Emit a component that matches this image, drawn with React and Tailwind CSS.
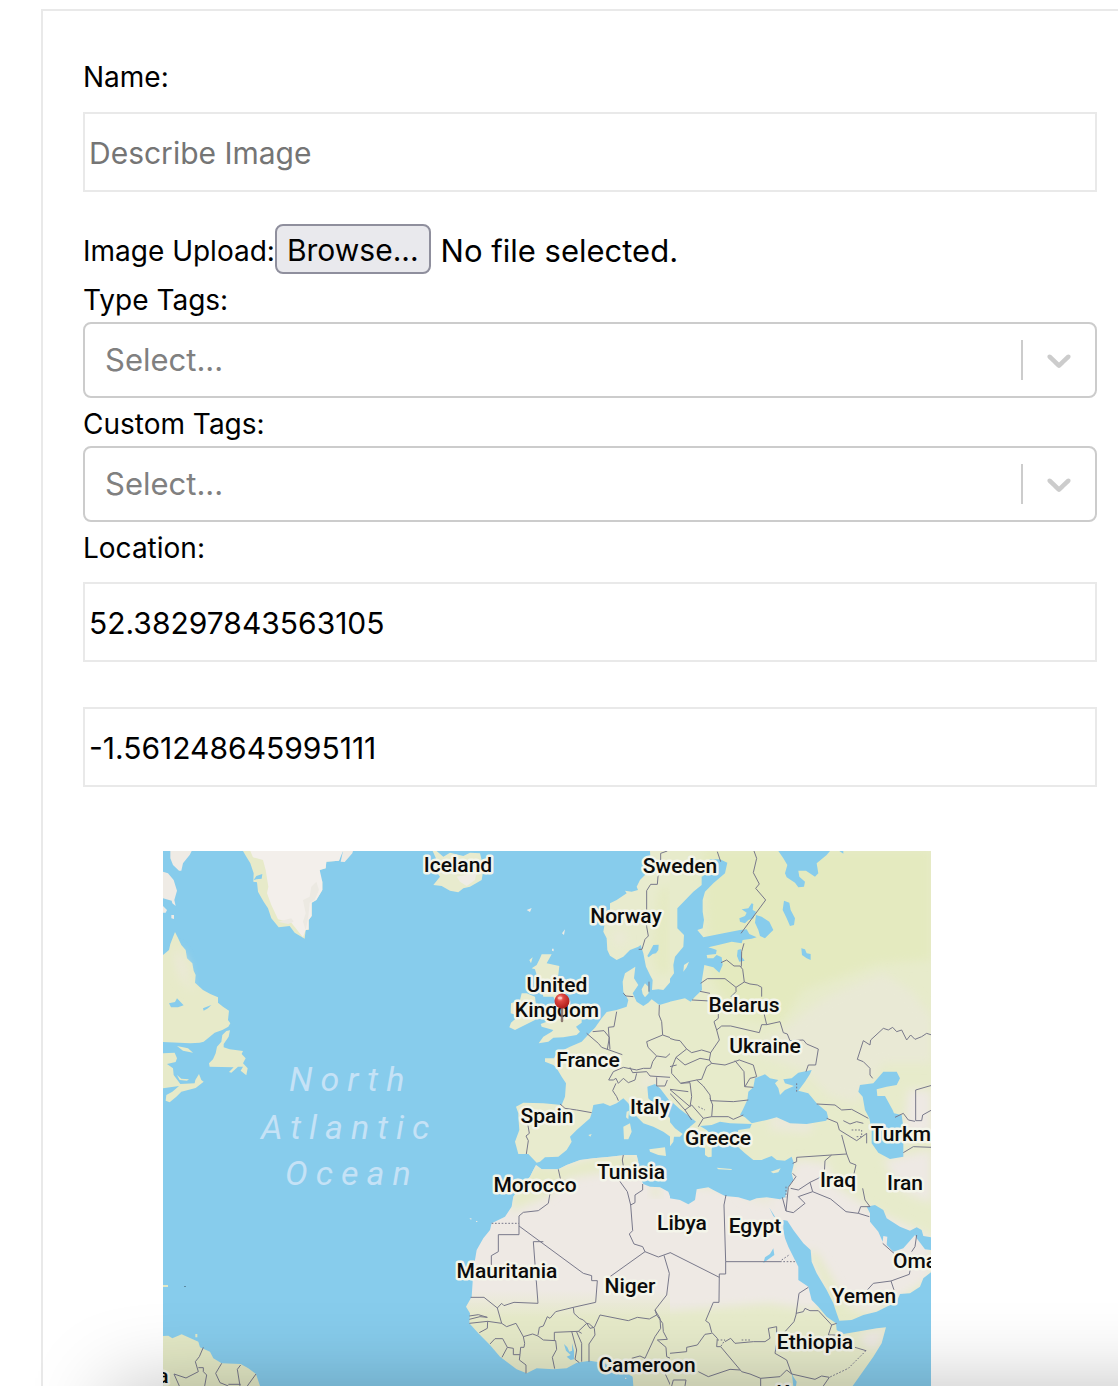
import { useRef, useState } from "react";

const labelClass = "block text-[28px] leading-9";
const inputClass =
  "block h-20 w-full border-2 border-[#e9e9e9] bg-white px-1 pt-0.5 text-[30px] text-black outline-none placeholder:text-[#757575] placeholder:opacity-100";

function TagSelect({ id, label }) {
  return (
    <div className="mt-2">
      <label htmlFor={id} className={labelClass}>
        {label}
      </label>
      <div className="relative mt-1">
        <select
          id={id}
          defaultValue=""
          className="block h-[76px] w-full appearance-none rounded-lg border-2 border-[#cccccc] bg-white pl-5 pr-20 text-[31px] text-[#808080] outline-none"
        >
          <option value="">Select...</option>
        </select>
        <div className="pointer-events-none absolute inset-y-0 right-0 flex items-center pr-[18px]">
          <span className="mr-4 h-10 w-0.5 bg-[#cccccc]" />
          <svg viewBox="0 0 20 20" className="size-10 fill-[#cccccc]" aria-hidden="true">
            <path d="M4.516 7.548c0.436-0.446 1.043-0.481 1.576 0l3.908 3.747 3.908-3.747c0.533-0.481 1.141-0.446 1.574 0 0.436 0.445 0.408 1.197 0 1.615-0.406 0.418-4.695 4.502-4.695 4.502-0.217 0.223-0.502 0.335-0.787 0.335s-0.57-0.112-0.789-0.335c0 0-4.287-4.084-4.695-4.502s-0.436-1.17 0-1.615z" />
          </svg>
        </div>
      </div>
    </div>
  );
}

const countries = [
  ["Iceland", 295, 21],
  ["Sweden", 517, 22],
  ["Norway", 463, 72],
  ["United", 394, 141],
  ["Kingdom", 394, 166],
  ["Belarus", 581, 161],
  ["Ukraine", 602, 202],
  ["France", 425, 216],
  ["Italy", 487, 263],
  ["Spain", 384, 272],
  ["Greece", 555, 294],
  ["Turkm", 738, 290],
  ["Tunisia", 468, 328],
  ["Morocco", 372, 341],
  ["Iraq", 675, 336],
  ["Iran", 742, 339],
  ["Libya", 519, 379],
  ["Egypt", 592, 382],
  ["Mauritania", 344, 427],
  ["Niger", 467, 442],
  ["Oman", 758, 417],
  ["Yemen", 701, 452],
  ["Ethiopia", 652, 498],
  ["Cameroon", 484, 521],
  ["Kenya", 642, 549],
  ["a", 0, 532],
];

const oceanLines = [
  ["North", 126, 240],
  ["Atlantic", 98, 288],
  ["Ocean", 122, 334],
];

function WorldMap() {
  return (
    <svg viewBox="0 0 768 535" className="block w-full" role="img" aria-label="Map">
      <defs>
        <linearGradient id="africa" gradientUnits="userSpaceOnUse" x1="0" y1="540" x2="0" y2="625">
          <stop offset="0" stopColor="#eee9e4" />
          <stop offset="1" stopColor="#e6eac9" />
        </linearGradient>
        <radialGradient id="pinHead" cx="0.38" cy="0.3" r="0.7">
          <stop offset="0" stopColor="#ff9a90" />
          <stop offset="0.35" stopColor="#dc4540" />
          <stop offset="1" stopColor="#b01e1a" />
        </radialGradient>
        <filter id="soft" x="-20%" y="-20%" width="140%" height="140%">
          <feGaussianBlur stdDeviation="14" />
        </filter>
        <clipPath id="landWest">
          <path d="M378,165L395,178 445,178 470,165 510,150 550,145 600,140 645,135 680,135 685,155 682,175 692,205 700,222 720,230 750,232 775,245 781,262V828H670L668,800 650,790 610,785 585,760 540,752 500,758 470,775 430,778 380,775 350,790 320,778 270,740 240,705 205,670 178,640 180,610 168,590 185,560 188,515 185,500 190,480 200,420 220,385 240,360 245,340 285,320 305,290 310,260 330,230 360,200 370,180Z" />
        </clipPath>
        <clipPath id="eastTile">
          <rect x="0" y="0" width="785" height="1608" />
        </clipPath>
      </defs>
      <rect width="768" height="535" fill="#87ccec" />
      <g transform="translate(0 -1) scale(0.33333)">
        {/* Greenland and eastern Canada */}
        <g fill="#e7eac9">
          <path d="M240,3L250,20 262,40 272,70 271,95 282,97 285,125 302,155 315,175 325,205 347,232 380,228 395,248 425,266 428,240 437,240 437,210 446,198 446,158 460,150 478,120 478,95 470,85 470,60 488,55 490,35 528,32 533,12 540,3Z" />
          <path fill="#f3efeb" d="M262,3L270,22 300,30 308,60 316,110 312,130 325,165 345,208 385,218 420,262 428,240 437,238 437,210 446,198 446,158 460,150 478,120 478,95 470,60 488,55 490,35 528,32 540,3Z" />
          <path fill="#ece9e2" d="M460,95L468,120 455,150 440,158 436,200 428,240 420,215 428,190 420,150 440,140 445,110Z M345,215L385,205 392,215 375,222Z" />
          <path fill="#efebe5" d="M533,35L545,36 568,10 570,3 540,3Z M22,3L86,3 80,15 72,25 60,40 55,62 48,62 30,45 22,25Z M0,65L15,70 32,90 42,122 34,150 38,168 28,160 26,152 0,145Z M0,168L12,180 8,188 0,188Z M25,195l8,0 0,12 -8,-2Z" />
          <path d="M36,246L44,262 55,285 68,300 72,325 88,340 92,362 98,375 96,398 120,420 142,432 165,442 165,458 180,470 198,482 195,510 202,520 196,530 178,540 155,548 135,565 122,575 110,578 82,580 0,576 0,315 18,300 22,282Z" />
          <path d="M190,543L201,541 197,560 182,582 182,592 200,598 240,603 236,612 248,625 240,640 254,655 250,676 233,662 240,650 225,650 205,668 198,666 212,652 140,650 138,640 150,628 158,610 162,590 175,575 178,555Z M42,588L75,595 90,608 60,602Z" />
          <path d="M0,610L35,608 42,625 38,636 12,642 30,655 32,675 52,702 95,700 97,690 108,672 115,690 122,695 98,714 55,725 40,740 20,757 8,752 10,735 28,725 48,708 0,715Z M42,675L55,686 78,688 72,692 50,690Z" />
        </g>
        <path fill="#ebe9d8" filter="url(#soft)" d="M38,290L60,320 75,350 75,390 95,420 75,415 50,380 35,330Z" />
        <path fill="#87ccec" d="M18,460L36,456 42,445 62,466 45,472 24,472Z M120,475L145,465 135,475 122,482Z M272,90L280,78 298,72 296,86 280,88Z" />

        {/* South America */}
        <g transform="translate(-489 780)">
          <path fill="#e4e9c6" d="M489,678L505,677 517,685 545,673 565,682 595,695 600,712 630,725 640,745 665,760 722,762 745,775 768,792 780,828H489Z M586,672h6v10h-6Z M489,525h15v6h-15Z" />
          <path fill="none" stroke="#77778a" strokeWidth="3" d="M610,712L598,740 586,755 595,785 558,804 522,792 538,828M595,773H610V785L620,795 614,828M665,760L647,790 660,818 685,828M722,765L712,778 720,828M768,792L742,828M685,823H722" />
        </g>

        {/* North-west Europe */}
        <g transform="translate(741 0)">
          <g fill="#e8ebce">
            <path d="M68,3L80,30 75,60 90,80 70,105 95,108 120,122 145,127 160,115 180,110 215,90 220,60 208,45 215,30 210,10 180,8 160,18 120,8 100,20 80,3Z" />
            <path fill="#efece5" d="M140,80L165,75 200,65 195,90 170,108 150,95Z M350,180l15,-6 -5,12Z M456,250L465,238 462,255Z M426,296l5,0 0,8 -5,-2Z" />
            <path d="M395,313L425,313 410,340 448,348 445,375 435,395 430,402 450,420 470,450 490,480 515,497 515,518 498,530 510,545 500,555 460,562 430,563 415,575 386,580 400,560 425,545 430,540 395,530 392,522 410,515 425,500 420,480 440,460 430,440 400,440 395,420 405,405 392,388 380,375 375,358 365,355 380,345 390,325Z M358,330l10,-8 -5,18Z" />
            <path d="M350,430L375,440 380,480 375,510 345,525 315,540 298,532 303,518 318,505 318,495 302,490 303,460 330,450 335,430Z" />
            <path d="M781,3H720L722,40 705,75 690,90 680,110 684,120 665,125 645,122 650,130 620,150 600,160 600,180 585,185 580,200 585,215 580,245 590,265 592,300 600,317 620,330 640,320 660,300 685,290 692,285 700,310 708,350 720,375 728,390 726,420 745,418 760,420 781,396Z" />
            <path d="M781,455L748,465 725,448 715,458 700,468 680,455 668,430 685,405 672,385 676,350 645,370 638,395 640,425 655,450 650,470 620,480 590,486 575,505 555,533 540,548 515,575 480,590 440,610 432,625 405,625 405,635 430,645 440,655 455,680 468,700 465,740 455,765 400,760 340,758 318,770 325,790 325,800 328,840 315,875 325,912 355,912 380,938 390,935 405,922 445,920 470,900 485,875 480,860 500,840 540,805 545,790 550,765 580,760 600,768 620,760 640,745 655,760 670,790 700,820 730,830 760,845 781,860Z" />
            <path d="M695,418L705,400 715,410 716,430 705,442 698,432Z M640,830L660,820 665,845 655,868 642,868Z M650,785L657,782 655,808 648,802Z M718,898L765,892 768,918 745,915 720,905Z M535,855l10,-3 -4,8Z" />
          </g>
          <path fill="#e5eac3" filter="url(#soft)" d="M745,120L781,100V370L745,375 725,310Z" />
          <path fill="#ebe9d8" filter="url(#soft)" d="M610,250L630,240 650,260 640,280 620,290Z M690,680L781,670V700L690,720Z" />
          <path fill="#87ccec" d="M712,710L735,702 750,715 781,755V805L750,780 715,745Z M712,318L722,300 730,285 746,284 745,300 738,310 728,312 716,322Z" />
          <path fill="none" stroke="#77778a" strokeWidth="3" d="M772,3L752,10V68L744,80 742,103H722L710,122V230L715,258 705,268 696,298H686M640,430L648,438 670,440M717,395V425M748,465L747,495 755,515 758,555M758,555L710,575 714,592 740,618 768,622 781,610M758,555L781,563M620,485L612,530 595,532 600,598M530,550L565,580 575,592 637,614M548,545L582,542 598,562 592,598M740,618L728,635 722,655 700,655 680,660 640,652M660,652L668,668 710,665 720,678 781,682M640,652L610,665 596,690 610,690 618,685 625,700 640,685 655,698 675,690 680,670M618,700L608,722 620,740 625,752M740,682V708H765L772,690M450,762L465,775 500,780 545,788M352,815L358,850 348,858 355,872 349,912" />
        </g>

        {/* North and west Africa */}
        <g transform="translate(741 780)">
          <g clipPath="url(#landWest)">
            <rect x="160" y="130" width="622" height="700" fill="url(#africa)" />
            <path fill="#e6eac8" filter="url(#soft)" d="M370,160L440,170 560,140 690,130 680,180 560,190 470,205 410,260 360,280 300,305 310,240Z" />
            <path fill="#e6eac8" filter="url(#soft)" d="M720,230L745,235 755,255 730,260Z" />
          </g>
          <path fill="#efebe4" d="M178,326l6,-2 0,5Z M198,333h4v3h-4Z M645,803h4v4h-4Z" />
          <path fill="#87ccec" d="M462,702L472,712 478,725 486,722 486,700 492,722 492,748 482,750 470,740 482,735 468,722Z" />
          <g fill="none" stroke="#77778a" strokeWidth="3">
            <path d="M445,178L452,210M420,250L415,280 385,302 340,307 327,318V374H265V425L244,437V465M327,348L520,490 545,497V512H562L557,577 490,592 437,605 420,625 412,620 400,648 388,652 384,675M400,395H370L384,580 312,577 282,587 275,580 262,594M182,562H222L262,594 275,640 290,650 318,640 340,680 368,672 384,678 400,690 437,692M178,640L233,634 275,640M178,628L210,620 232,622 205,614 178,618M233,634L232,655 208,668M240,702L255,686H278L292,712 276,742M292,712L310,715V734H330L332,712H342L344,700 340,680M330,734L328,750 348,765V790M437,692L440,718 427,742 434,776M433,692V667L505,664 515,670M485,664L500,720 495,748 508,758M500,666L515,700V755M490,592L492,610 508,625 520,630 530,640 505,664M530,640L540,655 553,652 570,615 655,632 682,622 718,627 740,615M530,640L538,642 553,655 555,675 537,702V755M740,615L735,600 770,555 778,490 762,436M735,600L750,625 752,655 735,680 705,745 690,738 665,745M740,615L758,640 760,665 772,688 742,690 768,712 770,740 781,745M765,790L781,825M600,500L705,425 745,441 781,428M705,425L698,410 672,402 658,372 668,362 662,285 652,245 628,212M662,285L675,278V255L698,240V222M640,135L637,150 640,168" />
            <path strokeDasharray="5 5" d="M245,340H327" />
          </g>
        </g>

        {/* Eastern Europe, Middle East and east Africa */}
        <g transform="translate(1521 0)" clipPath="url(#eastTile)">
          <rect x="-1" y="0" width="786" height="1608" fill="#e7ebcb" />
          <path fill="#e4eabf" filter="url(#soft)" d="M100,0H784V330L620,340 400,420 330,520 200,500 120,380 110,200Z" />
          <path fill="#e9e9d5" filter="url(#soft)" d="M400,490L470,440 560,400 640,370 720,420 784,500V640L640,640 560,760 480,740 440,700 400,660 230,600 340,540Z" />
          <path fill="#ebe9da" filter="url(#soft)" d="M300,790L430,810 420,850 300,840Z" />
          <path fill="#eee9e4" filter="url(#soft)" d="M-30,1000L340,1030 380,930 470,940 500,1010 610,1080 784,1160V1280L680,1350 600,1390 520,1360 440,1290 480,1350 420,1380 300,1360 -30,1385Z M640,930L784,900V1060L690,1020Z M715,720H784V850L700,880Z M570,1450L650,1430 620,1500 580,1490Z" />
          <path fill="#e5eac5" filter="url(#soft)" d="M410,1200L440,1210 500,1310 520,1390 505,1390 470,1320Z M200,1040L290,1040 310,1060 280,1050Z" />
          <g fill="#87ccec">
            <path d="M172,38L165,70 130,100 105,125 98,150 98,185 102,210 98,235 82,240 100,262 160,250 210,240 230,238 238,252 260,262 245,266 218,270 215,280 185,275 145,285 115,292 130,296 140,300 138,312 110,315 112,325 130,325 140,315 155,322 158,345 148,368 130,352 103,345 95,395 96,420 75,440 62,455 45,445 -1,455V388L12,370 10,345 15,320 40,290 42,255 22,235 22,175 70,125 95,105 95,80 130,60 125,40 118,28 150,28Z" />
            <path d="M325,3H480L470,15 440,40 445,70 435,80 408,62 385,62 388,80 405,95 402,110 385,112 375,98 350,82 345,70 352,45 340,25Z M508,3h12v8Z" />
            <path d="M258,195L275,200 298,215 310,240 300,250 285,265 270,258 265,240 255,218Z M208,205L225,198 230,188 215,178 235,175 245,160 250,162 248,180 258,185 250,205 235,210 225,220 210,215Z M342,152L358,158 362,180 375,205 372,225 360,228 350,205 338,180Z M394,295L405,298 410,310 422,312 422,330 410,325 396,315Z M203,300L213,297 215,320 224,332 208,335 201,318Z" />
            <path d="M255,685L285,673 300,685 325,690 315,700 325,715 330,735 345,720 372,708 345,700 340,688 365,685 385,668 425,660 420,672 405,695 385,722 415,730 440,760 470,785 475,805 468,812 410,822 360,820 320,802 290,810 245,820 225,802 210,795 218,780 232,750 235,725 250,712Z" />
            <path d="M640,665H680L690,685 680,705 650,710 620,718 622,738 645,738 668,780 672,790 695,795 700,830V920L660,927 625,908 605,880V840L598,805 585,780 578,740 565,725 570,705 610,700Z" />
            <path d="M-1,750L30,778 60,800 78,815 60,830 48,845 70,880 105,895 105,915 115,922 125,920 125,900 130,860 110,840 90,828 125,825 150,815 180,820 245,822 240,835 205,840 200,860 205,892 225,910 250,930 275,930 305,918 320,930 345,932 365,920 372,940 365,970 370,990 355,1010 345,1042 330,1048 290,1042 260,1045 240,1052 205,1042 165,1038 130,1020 115,1012 80,1018 75,1050 55,1063 30,1050 -1,1045Z" />
            <path d="M340,1110L352,1112 370,1140 400,1180 422,1200 425,1235 440,1270 470,1320 490,1360 500,1390 508,1412 545,1410 580,1395 620,1385 680,1355 690,1332 720,1330 750,1310 760,1285 785,1265V1608H548L575,1570 610,1520 635,1480 648,1432 620,1435 560,1445 520,1452 500,1440 498,1420 470,1400 445,1370 425,1350 415,1310 385,1290V1250L355,1190 345,1165 340,1140Z" />
            <path d="M298,1073L318,1105 310,1098Z M590,1070L615,1065 640,1080 650,1105 690,1130 720,1142 740,1132 755,1140 760,1158 785,1162V1200L765,1198 740,1165 735,1155 700,1195 670,1205 650,1185 652,1160 640,1158 638,1175 625,1145 600,1115 600,1090Z M280,1240L285,1222 300,1212 310,1195 313,1215 292,1230Z M365,1565L370,1580 380,1595 378,1608H370Z" />
          </g>
          <path fill="#e8ebce" d="M40,365L42,345 57,335 50,352Z M-1,815L15,835 38,852 30,860 12,860 10,875 -1,890Z M140,953L185,957V960L145,958Z M302,965L332,955 325,967 310,970Z" />
          <g fill="none" stroke="#77778a" strokeWidth="3">
            <path d="M142,5L152,35M252,3L260,25 250,68 268,102 257,115 287,150 213,250M222,280L215,305 214,350M153,338L170,330 192,348H210L218,358 223,396 198,412 165,386H112L92,400M90,424L120,430M66,450L120,453M198,412V425L183,440M223,396L240,402 262,405 275,412V440M282,490L290,524 330,515 340,548 352,552 360,572 400,570 410,582 445,597 437,645 415,645 408,665M290,524H275L268,548 182,528H155L140,540 132,515 145,505V490M140,540L148,570 122,608 118,630 125,640" />
            <path d="M-1,565L15,570 30,572 50,597 65,608 95,600 122,608M50,597L18,622 45,645 90,625 118,630M18,622L5,655 5,670 32,700 80,690 95,688 110,650 125,640 165,645 208,630 250,645 260,680 240,685 225,710M195,632L222,665 224,710 250,712M-1,650L20,645M80,690L100,708 120,735 122,752 190,755 235,750M60,698L65,740 60,770 -1,718M60,698L32,700M0,718L55,725M45,780L65,765 100,805 125,800 128,765 120,745M0,730L45,780 65,810M100,805L85,830M125,800L175,800 190,808 220,795" />
            <path d="M440,762L495,765 515,780 545,778 595,805M608,685L600,675 600,655 580,635 562,628 580,572 600,585 602,570 640,535 655,540 668,532 680,545 695,540 710,570 722,555 735,568 755,560 770,550 785,555M785,706L737,720V812H755L758,795 785,780M675,802L700,790 715,810 735,814M700,908L730,890 785,892" />
            <path d="M470,805L502,818 508,840 560,872 590,850 590,880M515,855L530,912 540,938 558,945 550,980M520,812L540,822 560,815 580,820M530,912L485,915 380,922V935L368,940M485,915L465,932 463,970 445,985 420,997 385,1020 362,1015M420,997L428,1025 482,1047 528,1085 565,1090 598,1100M428,1025L385,1040 405,1060 370,1088 348,1083 337,1042M565,1090L572,1070 600,1070M578,1015L585,1050 600,1070M368,970L378,980 355,1012 348,1083M168,1035L162,1065 167,1235V1272H148L147,1357 130,1357 107,1412 118,1420 125,1447 142,1465 140,1490 152,1490 215,1565 240,1572 272,1585 330,1580 350,1560 365,1572M-1,1207L148,1282M167,1235H330M638,1180L672,1210M592,1320L610,1300 663,1293 718,1273 722,1252M663,1293L672,1320M740,1155L735,1190 725,1205" />
            <path d="M415,1312L387,1330 378,1395 372,1415 345,1445M378,1390L400,1385 405,1375 420,1382 445,1382 485,1425 500,1420M485,1425L475,1455 498,1455M-1,1510L50,1505V1492L82,1485 105,1453 125,1450M165,1475L182,1465 195,1480 250,1475 285,1475 300,1465 295,1435 320,1430V1455M320,1480L315,1510 350,1530 365,1572 435,1588 455,1578 478,1582 460,1608M555,1492L588,1502M85,1565L115,1580 180,1558 210,1560M272,1585V1608M5,1608L10,1590H48L45,1608" />
            <path strokeDasharray="5 5" d="M588,1502L535,1555 478,1582M330,1235H380M335,1230L360,1213M380,700V728M85,770L105,780M142,1470H165L152,1490M215,1470H245M545,840H575V860H555M348,1010V1042" />
          </g>
        </g>
      </g>

      <g className="fill-[#c5e2f6] font-['Roboto',sans-serif] text-[34px] font-normal italic tracking-[8px]">
        {oceanLines.map(([text, x, y]) => (
          <text key={text} x={x} y={y}>
            {text}
          </text>
        ))}
      </g>
      <g
        className="fill-[#0c0c0c] stroke-[#f4f5ea] font-['Roboto',sans-serif] text-[21px] font-medium [paint-order:stroke]"
        strokeWidth="5"
        strokeLinejoin="round"
        textAnchor="middle"
      >
        {countries.map(([text, x, y]) => (
          <text key={text} x={x} y={y}>
            {text}
          </text>
        ))}
      </g>
      <g>
        <path d="M399,156V170" stroke="#7b6560" strokeWidth="2.5" strokeLinecap="round" opacity="0.85" />
        <circle cx="399" cy="150" r="7.5" fill="url(#pinHead)" />
        <ellipse cx="397" cy="147" rx="2.4" ry="1.6" fill="#ffffff" opacity="0.5" />
      </g>
      <rect x="21" y="435" width="2" height="1" fill="#5c8ba3" />
    </svg>
  );
}

export default function App() {
  const fileRef = useRef(null);
  const [fileName, setFileName] = useState("No file selected.");

  return (
    <main className="relative flow-root overflow-hidden bg-white font-['Inter',sans-serif] text-black">
      <form
        className="ml-[41px] mt-[9px] border-l-2 border-t-2 border-[#e9e9e9] pl-10 pr-[21px] pt-12"
        onSubmit={(e) => e.preventDefault()}
      >
        <label htmlFor="name" className={labelClass}>
          Name:
        </label>
        <input id="name" type="text" placeholder="Describe Image" className={`${inputClass} mt-[17px]`} />

        <div className="mt-8 flex h-[50px] items-center">
          <label htmlFor="image" className="pt-1 text-[28px] leading-9">
            Image Upload:
          </label>
          <input
            ref={fileRef}
            id="image"
            type="file"
            className="hidden"
            onChange={(e) => setFileName(e.target.files[0]?.name ?? "No file selected.")}
          />
          <button
            type="button"
            onClick={() => fileRef.current.click()}
            className="h-[50px] rounded-lg border-2 border-[#8f8f9d] bg-[#e9e9ed] px-2.5 pt-0.5 text-[30px] leading-none"
          >
            Browse...
          </button>
          <span className="ml-2.5 pt-0.5 text-[31px] leading-none">{fileName}</span>
        </div>

        <TagSelect id="type-tags" label="Type Tags:" />
        <TagSelect id="custom-tags" label="Custom Tags:" />

        <label htmlFor="latitude" className={`${labelClass} mt-2`}>
          Location:
        </label>
        <input id="latitude" type="text" defaultValue="52.38297843563105" className={`${inputClass} mt-4`} />
        <input
          type="text"
          aria-label="Longitude"
          defaultValue="-1.561248645995111"
          className={`${inputClass} mt-[45px]`}
        />

        <div className="ml-20 mt-16 max-w-[768px]">
          <WorldMap />
        </div>
      </form>
      <div className="pointer-events-none absolute -right-24 left-[110px] top-full h-40 shadow-[0_0_80px_rgba(0,0,0,0.25)]" />
    </main>
  );
}
